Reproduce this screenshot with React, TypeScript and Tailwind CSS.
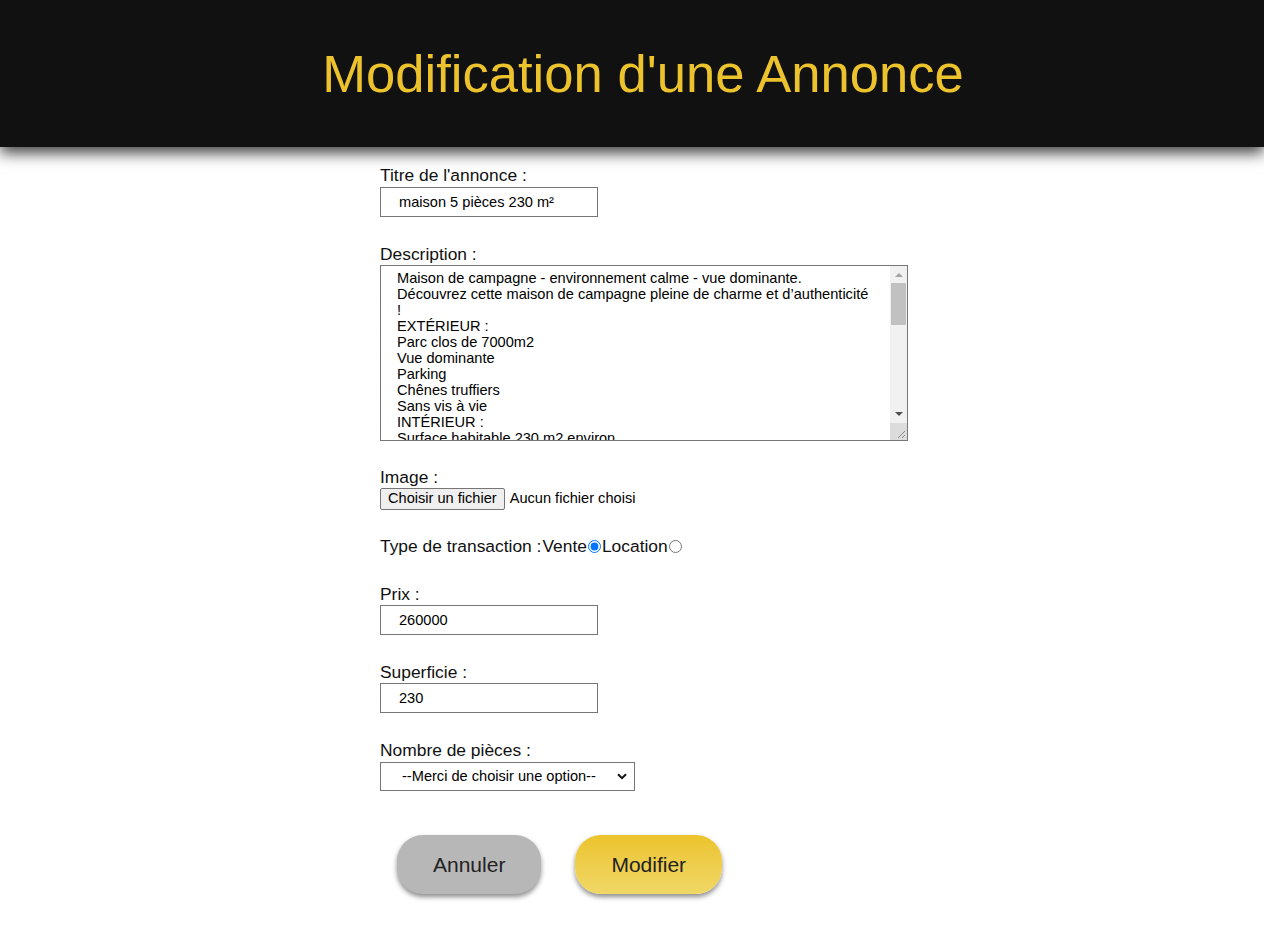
import React from "react";

const descr = `Maison de campagne - environnement calme - vue dominante.
Découvrez cette maison de campagne pleine de charme et d’authenticité
!
EXTÉRIEUR :
Parc clos de 7000m2
Vue dominante
Parking
Chênes truffiers
Sans vis à vie
INTÉRIEUR :
Surface habitable 230 m2 environ
Cuisine équipée
Salon - séjour avec cheminée
4 chambres
2 salles de bain`;

export default function App() {
  return (
    <div className="min-h-[944px] bg-white text-black" style={{ fontFamily: '"Liberation Sans", Arial, sans-serif' }}>
      <header className="h-[147px] bg-[#111111] flex items-center justify-center pl-[22px] shadow-[0_6px_14px_rgba(0,0,0,0.75)] relative z-10">
        <h1 className="text-[52.6px] leading-none text-[#ecc32c] mt-[2px]">Modification d'une Annonce</h1>
      </header>

      <form className="pl-[380px] pt-[18px] flex flex-col text-[17.4px] text-[#111]" onSubmit={(e) => e.preventDefault()}>
        <div className="flex flex-col mb-[27px]">
          <label className="h-[22px] leading-[21px]">Titre de l'annonce :</label>
          <input
            defaultValue="maison 5 pièces 230 m²"
            className="w-[218px] h-[30px] border border-[#767676] pl-[18px] text-[14.6px] text-black outline-none"
          />
        </div>

        <div className="flex flex-col mb-[26px]">
          <label className="h-[21px] leading-[21px]">Description :</label>
          <div className="w-[528px] h-[176px] border border-[#767676] flex">
            <textarea
              defaultValue={descr}
              wrap="off"
              className="flex-1 h-full pl-[16px] pt-[4px] text-[14.6px] leading-[16px] text-black overflow-hidden outline-none resize-none"
            />
            <div className="w-[17px] h-full bg-[#f1f1f1] flex flex-col items-center">
              <div className="h-[17px] w-full flex items-center justify-center">
                <svg width="8" height="5" viewBox="0 0 8 5"><path d="M0 5 L4 1 L8 5 Z" fill="#a3a3a3" /></svg>
              </div>
              <div className="w-[15px] h-[42px] bg-[#c1c1c1]" />
              <div className="flex-1" />
              <div className="h-[17px] w-full flex items-center justify-center">
                <svg width="8" height="5" viewBox="0 0 8 5"><path d="M0 0 L4 4 L8 0 Z" fill="#505050" /></svg>
              </div>
              <div className="h-[17px] w-full bg-[#dcdcdc] relative">
                <svg className="absolute right-[1px] bottom-[1px]" width="10" height="10" viewBox="0 0 10 10">
                  <path d="M9 2 L2 9 M9 6 L6 9" stroke="#8a8a8a" strokeWidth="1" fill="none" />
                </svg>
              </div>
            </div>
          </div>
        </div>

        <div className="flex flex-col mb-[26px]">
          <label className="h-[21px] leading-[21px]">Image :</label>
          <div className="flex items-center h-[22px] text-[14.6px]">
            <span className="h-[22px] px-[7px] flex items-center bg-[#efefef] border border-[#767676] rounded-[2px] text-black">Choisir un fichier</span>
            <span className="ml-[5px] text-black">Aucun fichier choisi</span>
          </div>
        </div>

        <div className="flex items-center h-[21px] mb-[27px]">
          <span>Type de transaction :</span>
          <span className="ml-[1px]">Vente</span>
          <input type="radio" name="t" defaultChecked className="m-0 mx-[1px] w-[13px] h-[13px]" />
          <span>Location</span>
          <input type="radio" name="t" className="m-0 mx-[1px] w-[13px] h-[13px]" />
        </div>

        <div className="flex flex-col mb-[27px]">
          <label className="h-[21px] leading-[21px]">Prix :</label>
          <input
            defaultValue="260000"
            className="w-[218px] h-[30px] border border-[#767676] pl-[18px] text-[14.6px] text-black outline-none"
          />
        </div>

        <div className="flex flex-col mb-[27px]">
          <label className="h-[21px] leading-[21px]">Superficie :</label>
          <input
            defaultValue="230"
            className="w-[218px] h-[30px] border border-[#767676] pl-[18px] text-[14.6px] text-black outline-none"
          />
        </div>

        <div className="flex flex-col mb-[44px]">
          <label className="h-[22px] leading-[21px]">Nombre de pièces :</label>
          <div className="relative w-[255px] h-[29px]">
            <select
              defaultValue=""
              className="appearance-none w-[255px] h-[29px] border border-[#767676] bg-white pl-[21px] text-[14.6px] text-black outline-none rounded-none"
            >
              <option value="">--Merci de choisir une option--</option>
              <option value="1">1</option>
              <option value="2">2</option>
              <option value="3">3</option>
              <option value="4">4</option>
              <option value="5">5</option>
            </select>
            <svg className="absolute left-[237px] top-[11px] pointer-events-none" width="10" height="7" viewBox="0 0 10 7">
              <path d="M1 1.2 L5 5.2 L9 1.2" fill="none" stroke="#111" strokeWidth="2" />
            </svg>
          </div>
        </div>

        <div className="flex gap-[34px] pl-[17px]">
          <button
            type="button"
            className="h-[59px] px-[36px] rounded-[26px] bg-[#b8b7b8] text-[21px] text-[#222] shadow-[0_3px_5px_rgba(0,0,0,0.45)]"
          >
            Annuler
          </button>
          <button
            type="submit"
            className="h-[59px] px-[36px] rounded-[26px] bg-gradient-to-b from-[#ecc32a] to-[#f0d865] text-[21px] text-[#222] shadow-[0_3px_5px_rgba(0,0,0,0.45)]"
          >
            Modifier
          </button>
        </div>
      </form>
    </div>
  );
}
